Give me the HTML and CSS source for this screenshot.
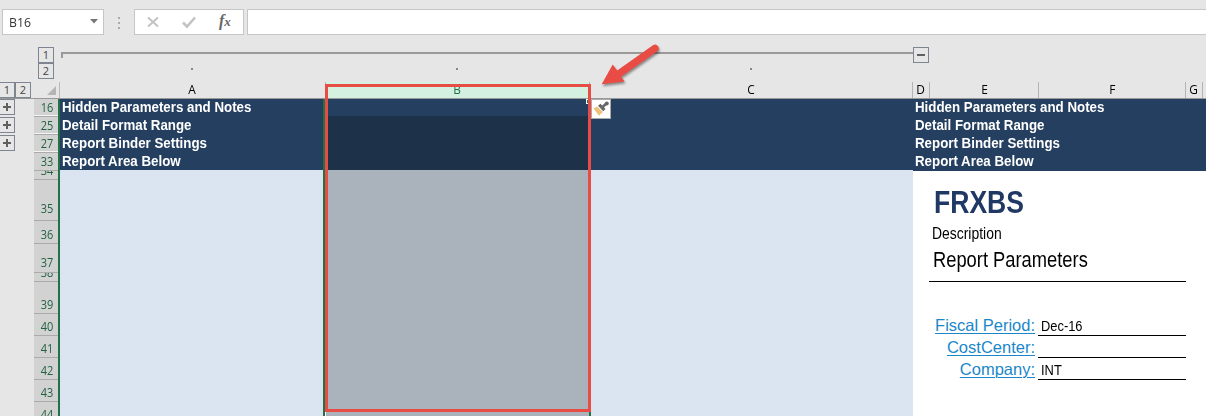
FILE: index.html
```html
<!DOCTYPE html>
<html lang="en">
<head>
<meta charset="utf-8">
<title>Worksheet</title>
<link rel="stylesheet" href="styles.css">
</head>
<body>
<div class="app">
  <div class="formula-bar">
    <div class="name-box"><span class="fit">B16</span><svg class="caret" width="8" height="5" viewBox="0 0 8 5"><path d="M0 0h8L4 4.5z"/></svg></div>
    <div class="grip"><i></i><i></i><i></i></div>
    <div class="fx-box">
      <svg width="110" height="26" viewBox="0 0 110 26"><path d="M14 8.500l10 9M24 8.500l-10 9" stroke="#c3c3c3" stroke-width="2"/><path d="M49 13.500l4 4 8-9" fill="none" stroke="#c3c3c3" stroke-width="2.6"/></svg>
      <span class="fx">f<small>x</small></span>
    </div>
    <div class="formula-input"></div>
  </div>
  <div class="outline-cols">
    <div class="levels"><span class="lvl">1</span><span class="lvl">2</span></div>
    <div class="group"><div class="bracket"></div><div class="dots"><i></i><i></i><i></i></div></div>
    <span class="lvl minus"></span>
  </div>
  <div class="headers">
    <div class="row-levels"><span class="lvl">1</span><span class="lvl">2</span></div>
    <div class="corner"><svg width="9" height="9" viewBox="0 0 9 9"><path d="M9 0v9H0z"/></svg></div>
    <div class="col a"><b>A</b></div><div class="col b"><b>B</b></div><div class="col c"><b>C</b></div><div class="col d"><b>D</b></div><div class="col e"><b>E</b></div><div class="col f"><b>F</b></div><div class="col g"><b>G</b></div>
  </div>
  <div class="sheet">
    <div class="outline-rows"><span class="lvl plus"></span><span class="lvl plus"></span><span class="lvl plus"></span></div>
    <div class="row-nums">
      <div class="rn h18 gap"><b>16</b></div><div class="rn h18 gap"><b>25</b></div><div class="rn h18 gap"><b>27</b></div><div class="rn h18"><b>33</b></div>
      <div class="rn h9"><b>34</b></div><div class="rn h41"><b>35</b></div><div class="rn h23"><b>36</b></div><div class="rn h29"><b>37</b></div><div class="rn h9"><b>38</b></div><div class="rn h32"><b>39</b></div>
      <div class="rn h22"><b>40</b></div><div class="rn h22"><b>41</b></div><div class="rn h22"><b>42</b></div><div class="rn h22"><b>43</b></div><div class="rn h22"><b>44</b></div>
    </div>
    <div class="frozen">
      <div class="col-a"><div class="band"><p>Hidden Parameters and Notes</p><p>Detail Format Range</p><p>Report Binder Settings</p><p>Report Area Below</p></div></div>
      <div class="col-b"><div class="active"></div><div class="sel-dark"></div><div class="sel"></div></div>
      <div class="col-c"><div class="band"></div></div>
    </div>
    <div class="report">
      <div class="band tall"><p>Hidden Parameters and Notes</p><p>Detail Format Range</p><p>Report Binder Settings</p><p>Report Area Below</p></div>
      <div class="title"><span class="fit">FRXBS</span></div>
      <div class="desc"><span class="fit">Description</span></div>
      <div class="params"><span class="fit">Report Parameters</span></div>
      <div class="fields">
        <div class="field"><a>Fiscal Period:</a><span class="val"><b>Dec-16</b></span></div>
        <div class="field"><a>CostCenter:</a><span class="val"></span></div>
        <div class="field"><a>Company:</a><span class="val"><b>INT</b></span></div>
      </div>
    </div>
  </div>
  <div class="handle"></div>
  <div class="highlight"></div>
  <div class="paste-badge"><svg width="18" height="18" viewBox="0 0 18 18"><path d="M1.500 8.500L5 6.500L11 12L7 15.700z" fill="#ecc27c"/><path d="M6 5.800L8.500 3.800L13.500 9L11.300 11.200z" fill="#666"/><path d="M10.500 7L15 3" stroke="#666" stroke-width="2.6"/><circle cx="14.800" cy="3.500" r="2" fill="#666"/></svg></div>
  <svg class="arrow" width="76" height="56" viewBox="0 0 76 56"><path d="M6.700 46.300L17.700 26.500L22.200 32.500L57.900 7.300A3.700 3.700 0 0 1 62.100 13.400L26 38.700L29.700 43.500z"/></svg>
</div>
</body>
</html>
```
FILE: styles.css
```css
* { box-sizing: border-box; }
body { margin: 0; }
.app { position: relative; width: 1206px; height: 416px; overflow: hidden; background: #e6e6e6; font-family: "Liberation Sans", Arial, sans-serif; color: #000; }
p { margin: 0; }
.fit { display: inline-block; transform-origin: left center; white-space: nowrap; }

/* Formula bar */
.formula-bar { display: flex; height: 47px; padding: 9px 0 12px 2px; }
.name-box { width: 102px; height: 26px; background: #fff; border: 1px solid #c6c6c6; display: flex; align-items: center; justify-content: space-between; padding: 0 5px 0 6px; font: 12.500px "Open Sans", sans-serif; color: #333; }
.name-box .fit { transform: scaleX(.98); }
.caret { fill: #777; margin-top: -1px; }
.grip { width: 30px; display: flex; flex-direction: column; align-items: center; gap: 3px; padding-top: 8px; }
.grip i { width: 2px; height: 2px; background: #aaa; }
.fx-box { position: relative; width: 110px; height: 26px; background: #fff; border: 1px solid #c6c6c6; }
.fx-box svg { display: block; margin: -1px 0 0 -1px; }
.fx { position: absolute; left: 84px; top: 1px; font: italic bold 16px/20px "Liberation Serif", serif; color: #666; }
.fx small { font-size: 13px; }
.formula-input { margin-left: 3px; flex: 1; height: 26px; background: #fff; border: 1px solid #c6c6c6; border-right: 0; }

/* Outline controls */
.lvl { display: flex; align-items: center; justify-content: center; width: 16px; height: 16px; border: 1px solid #7f8590; font: 11px/14px "Open Sans", sans-serif; color: #444; flex: none; }
.outline-cols { display: flex; height: 35px; padding-left: 38px; }
.levels { width: 16px; }
.group { margin-left: 7px; width: 852px; padding-top: 5px; }
.bracket { height: 6px; border-top: 2px solid #999; border-left: 2px solid #999; }
.dots { display: flex; padding: 10px 0 0 130px; }
.dots i { width: 2px; height: 2px; background: #888; }
.dots i + i { margin-left: 263px; }
.dots i:last-child { margin-left: 292px; }
.minus, .plus { background: linear-gradient(#606060, #606060) center / 8px 2px no-repeat; }
.plus { background: linear-gradient(#606060, #606060) center / 8px 2px no-repeat, linear-gradient(#606060, #606060) center / 2px 8px no-repeat; }

/* Column headers */
.headers { display: flex; height: 17px; border-bottom: 1px solid #999; }
.row-levels { display: flex; width: 34px; height: 16px; margin-left: -1px; }
.corner { width: 27px; padding: 4px 0 0 14px; border-right: 1px solid #bbb; }
.corner svg { display: block; fill: #b5b5b5; }
.col { border-right: 1px solid #b4b4b4; text-align: center; font: 12.500px/16px "Open Sans", sans-serif; }
.col b { font-weight: 400; display: inline-block; transform: scaleX(.95); }
.a { width: 266px; padding-right: 2px; }
.b { width: 264px; background: #d3f0e0; color: #217346; }
.c { width: 323px; }
.d { width: 17px; }
.e { width: 109px; }
.f { width: 147px; }
.g { width: 17px; }

/* Grid */
.sheet { display: flex; height: 317px; }
.outline-rows { width: 35px; display: flex; flex-direction: column; gap: 2px; margin-left: -1px; }
.row-nums { width: 24px; background: #d2d2d2; flex: none; height: 317px; overflow: hidden; }
.rn { border-bottom: 1px solid #ababab; overflow: hidden; display: flex; align-items: flex-end; justify-content: flex-end; padding-right: 5px; font: 12.500px/16px "Open Sans", sans-serif; color: #20623f; }
.rn b { font-weight: 400; transform: scaleX(.88); transform-origin: right; }
.gap { box-shadow: inset 0 -1px #f4f4f4; }
.h18 { height: 18px; }
.h9 { height: 9px; }
.h41 { height: 41px; padding-bottom: 3px; }
.h23 { height: 23px; }
.h29 { height: 29px; padding-bottom: 1px; }
.h32 { height: 32px; }
.h22 { height: 22px; }
.frozen { display: flex; width: 855px; flex: none; background: #dbe5f1; border-left: 2px solid #217346; }
.band { height: 71px; background: #243f60; color: #fff; font-weight: 700; font-size: 14px; padding-left: 2px; white-space: nowrap; }
.band p { height: 18px; line-height: 17px; transform: scaleX(.951); transform-origin: left; }
.tall { height: 72px; }
.col-a { width: 265px; border-right: 2px solid #217346; }
.col-b { width: 266px; display: flex; flex-direction: column; border-left: 1px solid #fff; border-right: 2px solid #217346; }
.active { height: 17px; background: #243f60; }
.sel-dark { height: 54px; background: #1d3249; }
.sel { flex: 1; background: #aab2bb; }
.col-c { flex: 1; }

/* Report */
.report { flex: 1; background: #fff; }
.title { height: 51px; padding: 13px 0 0 21px; font-weight: 700; font-size: 32px; line-height: 36px; color: #1f3864; }
.title .fit { transform: scaleX(.83); }
.desc { height: 22px; padding: 2px 0 0 19px; font-size: 16px; line-height: 20px; }
.desc .fit { transform: scaleX(.87); }
.params { margin-left: 16px; width: 257px; height: 38px; border-bottom: 1px solid #000; padding: 4px 0 0 4px; font-size: 22px; line-height: 24px; }
.params .fit { transform: scaleX(.833); }
.fields { margin-left: 16px; width: 257px; padding-top: 32px; }
.field { display: flex; height: 22px; }
.field a { width: 106px; text-align: right; color: #1b87c9; text-decoration: underline; text-underline-offset: 2px; text-decoration-thickness: 1px; font-size: 16.500px; line-height: 23px; white-space: nowrap; }
.val { margin-left: 3px; width: 148px; border-bottom: 1px solid #000; padding-left: 3px; font-size: 14px; line-height: 24px; }
.val b { display: inline-block; font-weight: 400; transform: scaleX(.92); transform-origin: left; }

/* Annotations over the grid */
.highlight { position: absolute; left: 325px; top: 84px; width: 266px; height: 328px; border: 3px solid #e84c44; }
.handle { position: absolute; left: 586px; top: 99px; width: 4px; height: 5px; border: 1px solid #fff; background: #217346; }
.paste-badge { position: absolute; left: 591px; top: 99px; width: 20px; height: 20px; background: #fff; border: 1px solid #ababab; }
.paste-badge svg { display: block; }
.arrow { position: absolute; left: 595px; top: 38px; fill: #e84c44; filter: drop-shadow(1px 2px 1px rgba(0,0,0,.4)); }
```
